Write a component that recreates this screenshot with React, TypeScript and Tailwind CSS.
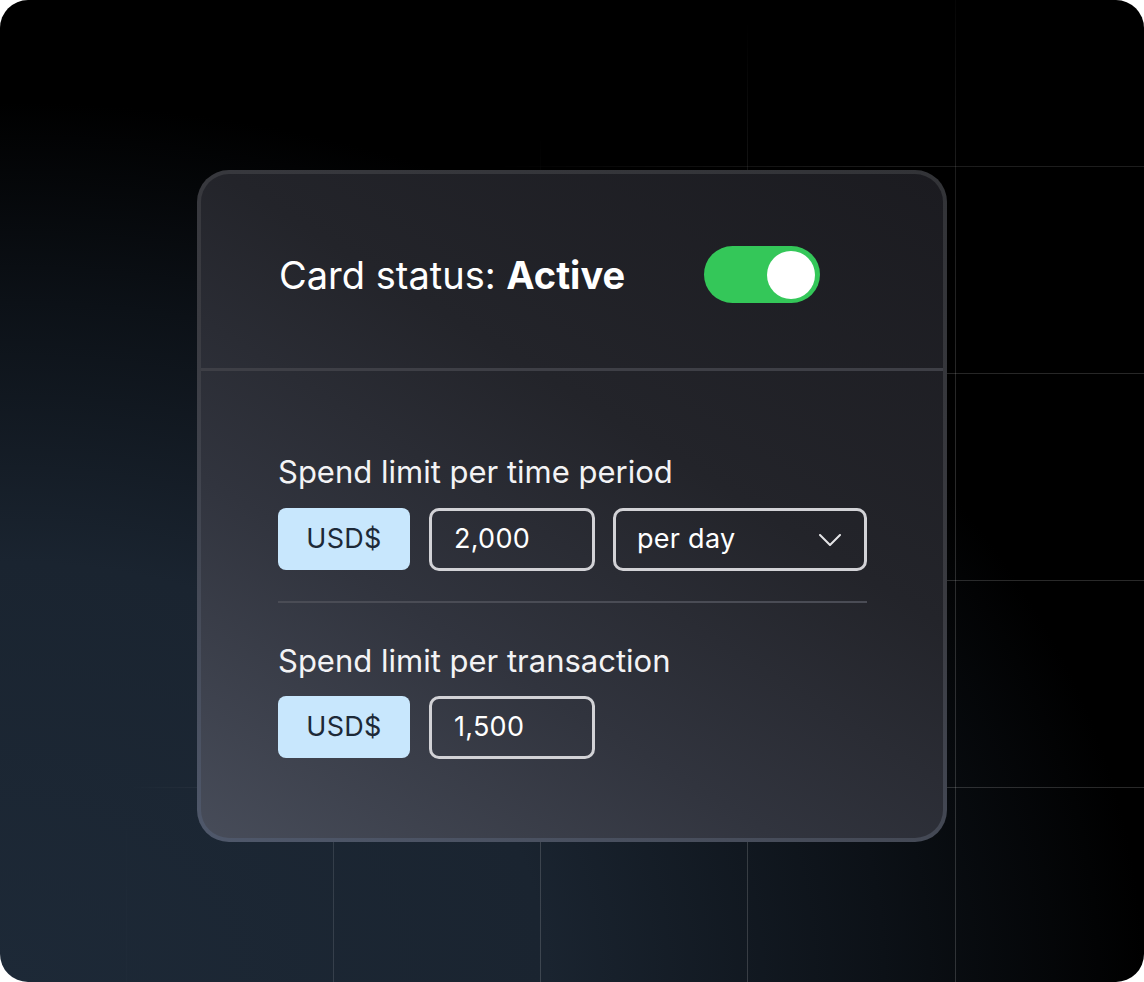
import React from "react";

const font = { fontFamily: "Inter, 'Noto Sans', sans-serif" };

function Grid() {
  const xs = [126, 333, 540, 747, 955];
  const ys = [166, 373, 580, 787];
  return (
    <svg className="absolute inset-0 pointer-events-none" width="1144" height="982" viewBox="0 0 1144 982">
      <defs>
        <radialGradient id="fade" gradientUnits="userSpaceOnUse" cx="1144" cy="982" r="1040">
          <stop offset="0.55" stopColor="#fff" stopOpacity="1" />
          <stop offset="0.8" stopColor="#fff" stopOpacity="0.7" />
          <stop offset="1" stopColor="#fff" stopOpacity="0" />
        </radialGradient>
        <mask id="m" maskUnits="userSpaceOnUse" x="0" y="0" width="1144" height="982">
          <rect x="0" y="0" width="1144" height="982" fill="url(#fade)" />
        </mask>
      </defs>
      <g mask="url(#m)" stroke="rgba(255,255,255,0.16)" strokeWidth="1">
        {xs.map((x) => (
          <line key={"x" + x} x1={x + 0.5} y1={0} x2={x + 0.5} y2={982} />
        ))}
        {ys.map((y) => (
          <line key={"y" + y} x1={0} y1={y + 0.5} x2={1144} y2={y + 0.5} />
        ))}
      </g>
    </svg>
  );
}

function Chevron() {
  return (
    <svg width="22" height="12" viewBox="0 0 22 12" fill="none">
      <path d="M1 1L11 11L21 1" stroke="#e5e5e7" strokeWidth="2" strokeLinecap="round" strokeLinejoin="round" />
    </svg>
  );
}

function Currency() {
  return (
    <div className="flex h-[62px] w-[132px] items-center justify-center rounded-[8px] bg-[#c8e7fd] text-[27px] tracking-[0.01em] text-[#1d2937]">
      USD$
    </div>
  );
}

function Amount({ value }: { value: string }) {
  return (
    <div className="flex h-[63px] w-[166px] items-center rounded-[10px] border-[3px] border-[#d2d2d6] pl-[22px] text-[27px] tracking-[0.01em] text-white">
      {value}
    </div>
  );
}

export default function App() {
  return (
    <div className="min-h-screen bg-white" style={font}>
      <div className="relative h-[982px] w-[1144px] overflow-hidden rounded-[28px] bg-[radial-gradient(ellipse_1300px_1000px_at_0%_100%,#1d2937_0%,#1a2430_42%,#0c1117_68%,#000000_88%)]">
        <Grid />
        <div className="relative pl-[197px] pt-[170px]">
          <div className="w-[750px] rounded-[32px] bg-[linear-gradient(200deg,#323337_0%,#3a3b41_45%,#4f586b_100%)] p-[4px]">
            <div className="rounded-[28px] bg-[linear-gradient(32deg,#474c59_0%,#31343e_32%,#23242a_60%,#1b1b20_100%)]">
              <div className="flex items-center gap-[79px] pb-[65px] pl-[78px] pt-[72px]">
                <div className="text-[38px] leading-[46px] text-white">
                  Card status: <span className="font-bold">Active</span>
                </div>
                <div className="flex h-[57px] w-[116px] items-center justify-end rounded-full bg-[#34c759] pr-[5px]">
                  <div className="h-[48px] w-[48px] rounded-full bg-white" />
                </div>
              </div>
              <div className="h-[3px] bg-[#3e3f46]" />
              <div className="pb-[79px] pl-[77px] pt-[83px]">
                <div className="w-[589px]">
                  <div className="mb-[18px] text-[31px] leading-[36px] text-[#f3f3f5]">
                    Spend limit per time period
                  </div>
                  <div className="flex gap-[18px]">
                    <div className="mr-[1px]">
                      <Currency />
                    </div>
                    <Amount value="2,000" />
                    <div className="flex h-[63px] w-[254px] items-center justify-between rounded-[10px] border-[3px] border-[#d2d2d6] pl-[21px] pr-[23px] text-[27px] tracking-[0.01em] text-white">
                      <span>per day</span>
                      <Chevron />
                    </div>
                  </div>
                  <div className="mb-[40px] mt-[30px] h-[2px] bg-[#4a4c55]" />
                  <div className="mb-[17px] text-[31px] leading-[36px] text-[#f3f3f5]">
                    Spend limit per transaction
                  </div>
                  <div className="flex gap-[18px]">
                    <div className="mr-[1px]">
                      <Currency />
                    </div>
                    <Amount value="1,500" />
                  </div>
                </div>
              </div>
            </div>
          </div>
        </div>
      </div>
    </div>
  );
}
